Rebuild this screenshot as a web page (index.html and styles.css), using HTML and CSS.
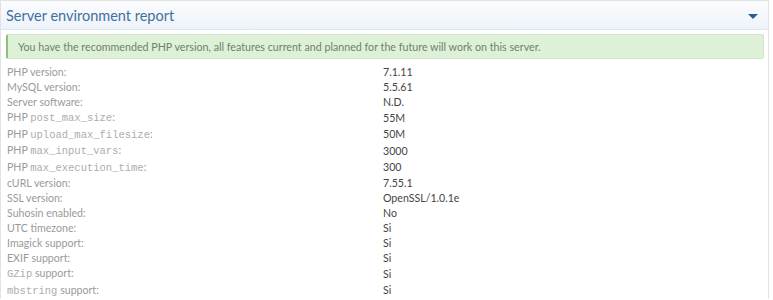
FILE: index.html
```html
<!DOCTYPE html>
<html lang="en">
  <head>
    <meta charset="UTF-8" />
    <title>Server environment report</title>
    <link rel="stylesheet" href="styles.css">
  </head>
  <body>
    <div class="panel">
      <div class="panel-heading">
        <h3 class="panel-title">Server environment report</h3>
        <span class="caret"></span>
      </div>
      <div class="panel-body">
        <div class="alert">You have the recommended PHP version, all features current and planned for the future will work on this server.</div>
        <table class="report">
          <tr><td>PHP version:</td><td>7.1.11</td></tr>
          <tr><td>MySQL version:</td><td>5.5.61</td></tr>
          <tr><td>Server software:</td><td>N.D.</td></tr>
          <tr class="code-row"><td>PHP <code>post_max_size</code>:</td><td>55M</td></tr>
          <tr class="code-row"><td>PHP <code>upload_max_filesize</code>:</td><td>50M</td></tr>
          <tr class="code-row"><td>PHP <code>max_input_vars</code>:</td><td>3000</td></tr>
          <tr class="code-row"><td>PHP <code>max_execution_time</code>:</td><td>300</td></tr>
          <tr><td>cURL version:</td><td>7.55.1</td></tr>
          <tr><td>SSL version:</td><td>OpenSSL/1.0.1e</td></tr>
          <tr><td>Suhosin enabled:</td><td>No</td></tr>
          <tr><td>UTC timezone:</td><td>Si</td></tr>
          <tr><td>Imagick support:</td><td>Si</td></tr>
          <tr><td>EXIF support:</td><td>Si</td></tr>
          <tr class="code-row"><td><code>GZip</code> support:</td><td>Si</td></tr>
          <tr class="code-row"><td><code>mbstring</code> support:</td><td>Si</td></tr>
        </table>
      </div>
    </div>
  </body>
</html>
```

FILE: styles.css
```css
* {
  margin: 0;
  padding: 0;
  box-sizing: border-box;
}

body {
  background: #fff;
  font-family: Lato, "Open Sans", sans-serif;
  font-size: 10.6px;
  overflow: hidden;
}

.panel {
  width: 769px;
  border: 1px solid #e3e3e3;
  border-bottom: none;
}

.panel-heading {
  height: 29px;
  display: flex;
  align-items: center;
  justify-content: space-between;
  padding: 0 10px 0 5px;
  background: linear-gradient(to bottom, #fbfcfe, #edf3fa);
  border-bottom: 1px solid #dde6ef;
}

.panel-title {
  font-weight: normal;
  font-size: 14.5px;
  color: #40709f;
}

.caret {
  width: 0;
  height: 0;
  border-left: 5px solid transparent;
  border-right: 5px solid transparent;
  border-top: 5px solid #2a5f93;
  margin-top: 2px;
}

.panel-body {
  padding: 4px 4px 0 5px;
}

.alert {
  background: #dff0d8;
  border: 1px solid #d0e6c6;
  border-left: 2px solid #8fbf7f;
  color: #6b8468;
  font-size: 10.7px;
  height: 25px;
  display: flex;
  align-items: center;
  padding-left: 10px;
  border-radius: 2px;
  margin-bottom: 6px;
}

.report {
  border-collapse: collapse;
  width: 100%;
}

.report td {
  height: 15px;
  line-height: 15px;
  padding: 0;
  vertical-align: middle;
}

.report td:first-child {
  width: 377px;
  color: #9a9a9a;
  padding-left: 1px;
}

.report td:last-child {
  color: #444;
}

.report .code-row td {
  height: 16.5px;
}

code {
  font-family: "Liberation Mono", monospace;
  font-size: 10.5px;
  color: #adadad;
}
```
